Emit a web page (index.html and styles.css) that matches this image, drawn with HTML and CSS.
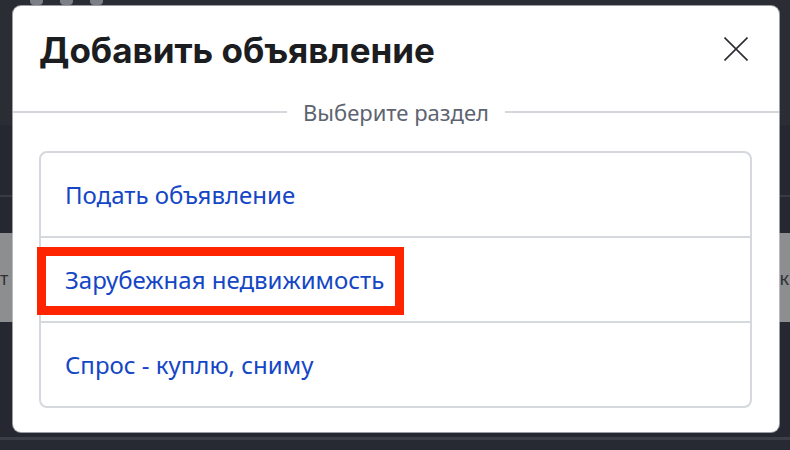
FILE: index.html
```html
<!DOCTYPE html>
<html lang="ru">
<head>
    <meta charset="UTF-8">
    <meta name="viewport" content="width=device-width, initial-scale=1.0">
    <title>Добавить объявление</title>
    <link rel="stylesheet" href="styles.css">
</head>
<body>

<!-- page behind the dialog -->
<div class="page">
    <div class="page-top">
        <span class="blob"></span>
        <span class="blob"></span>
        <span class="blob"></span>
    </div>
    <div class="page-band page-band-tall"></div>
    <div class="page-band"></div>
    <div class="page-tabs">
        <span class="tab-left">т</span>
        <span class="tab-right">к</span>
    </div>
    <div class="page-rest"></div>
    <div class="page-foot"></div>
</div>

<div class="modal">
    <div class="modal-head">
        <h2 class="modal-title">Добавить объявление</h2>
        <button class="modal-close" type="button" aria-label="Закрыть">
            <svg width="24" height="24" viewBox="0 0 24 24">
                <path d="M0.5 0.5 L23.5 23.5 M23.5 0.5 L0.5 23.5" stroke="#2b2d33" stroke-width="1.6" fill="none"/>
            </svg>
        </button>
    </div>

    <div class="section-label">Выберите раздел</div>

    <ul class="sections">
        <li class="section-item"><a href="#">Подать объявление</a></li>
        <li class="section-item">
            <a href="#">Зарубежная недвижимость</a>
            <span class="mark"></span>
        </li>
        <li class="section-item"><a href="#">Спрос - куплю, сниму</a></li>
    </ul>
</div>

</body>
</html>
```

FILE: styles.css
```css
/* page */
body {
    margin: 0;
    background-color: #272a33;
    font-family: "Noto Sans", "Open Sans", sans-serif;
    overflow: hidden;
}
.page {
    height: 450px;
}
.page-top {
    height: 125px;
    background-color: #2b2d35;
    display: flex;
    gap: 17px;
    padding-left: 30px;
    box-sizing: border-box;
}
.blob {
    width: 13px;
    height: 5px;
    background-color: #7d7f86;
    border-radius: 0 0 4px 4px;
}
.page-band {
    height: 36px;
    background-color: #262831;
}
.page-band-tall {
    height: 70px;
    border-bottom: 2px solid #393b44;
}
.page-tabs {
    height: 89px;
    background-color: #8d8e8f;
    display: flex;
    justify-content: space-between;
    align-items: center;
    color: #2e3035;
    font-size: 18px;
}
.tab-left {
    margin-left: 0;
}
.tab-right {
    margin-right: 1px;
}
.page-rest {
    height: 115px;
    background-color: #262831;
}
.page-foot {
    height: 3px;
    background-color: #3b3e47;
}

/* dialog */
.modal {
    position: absolute;
    left: 13px;
    top: 6px;
    width: 766px;
    height: 426px;
    background-color: #fff;
    border-radius: 8px;
    box-shadow: 0 0 0 1px rgba(205, 207, 212, 0.7);
}
.modal-head {
    display: flex;
    justify-content: space-between;
    align-items: flex-start;
    padding: 23px 31px 0 26px;
}
.modal-title {
    margin: 0;
    font-family: "Inter", sans-serif;
    font-weight: 700;
    font-size: 35px;
    line-height: 42px;
    color: #1c1d21;
}
.modal-close {
    border: none;
    background: none;
    padding: 0;
    margin-top: 8px;
    width: 24px;
    height: 24px;
    cursor: pointer;
}
.section-label {
    display: flex;
    align-items: center;
    gap: 16px;
    margin-top: 26px;
    color: #5d6470;
    font-size: 22px;
    line-height: 30px;
}
.section-label::before,
.section-label::after {
    content: "";
    flex: 1;
    height: 2px;
    background-color: #d3d6db;
}
.sections {
    list-style: none;
    margin: 24px 27px 0 26px;
    padding: 0;
    border: 2px solid #d5d8dc;
    border-radius: 8px;
}
.section-item {
    position: relative;
    height: 83px;
    display: flex;
    align-items: center;
    padding-left: 24px;
    border-top: 2px solid #d5d8dc;
}
.section-item:first-child {
    border-top: none;
}
.section-item a {
    color: #1446c6;
    text-decoration: none;
    font-size: 24px;
}
/* red highlight */
.mark {
    position: absolute;
    left: -4px;
    top: 9px;
    width: 349px;
    height: 50px;
    border: 9px solid #ff2400;
}
```
